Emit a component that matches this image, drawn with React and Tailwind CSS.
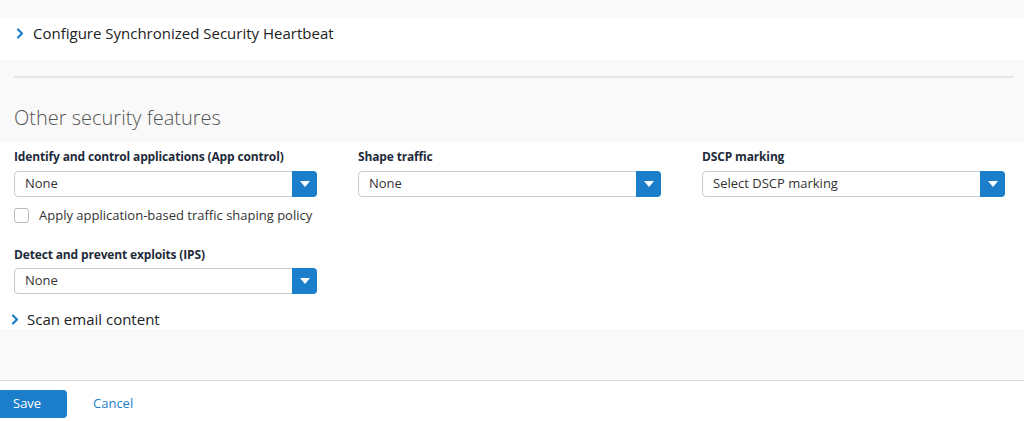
import React from "react";

const font = { fontFamily: '"Open Sans", "Noto Sans", sans-serif' };

function Chevron() {
  return (
    <svg width="8" height="11" viewBox="0 0 8 11" className="shrink-0">
      <polyline points="2,1.5 6,5.5 2,9.5" fill="none" stroke="#1a7ecb" strokeWidth="2.2" strokeLinecap="round" strokeLinejoin="round" />
    </svg>
  );
}

function Select({ value }) {
  return (
    <div className="flex h-[26px] w-[303px] rounded-[4px] border border-[#c9c9c9] bg-white">
      <div className="flex flex-1 items-center pl-[10px] text-[13px] text-[#333]">{value}</div>
      <div className="-my-px -mr-px flex w-[25px] items-center justify-center rounded-r-[4px] bg-[#1b7ecb]">
        <svg width="10" height="6" viewBox="0 0 10 6">
          <polygon points="0,0 10,0 5,6" fill="white" />
        </svg>
      </div>
    </div>
  );
}

function Label({ children, className = "mb-[6px]" }) {
  return <div className={`${className} text-[12px] font-bold leading-[16px] tracking-[-0.15px] text-[#1e2b3a]`}>{children}</div>;
}

export default function App() {
  return (
    <div className="w-[1024px] h-[421px] bg-white overflow-hidden" style={font}>
      <div className="h-[18px] bg-[#f9f9f9]" />
      <div className="flex h-[42px] items-start gap-[9px] pl-[16px] pt-[5px] text-[15px] leading-[20px] text-[#222]">
        <span className="flex h-[20px] items-center"><Chevron /></span>
        <span>Configure Synchronized Security Heartbeat</span>
      </div>
      <div className="h-[82px] bg-[#f9f9f9] pt-[16px]">
        <div className="ml-[14px] mr-[10px] h-[2px] bg-[#e6e6e6]" />
        <div className="ml-[14px] mt-[27px] text-[20px] font-light leading-[26px] text-[#555]">Other security features</div>
      </div>
      <div className="h-[187px] bg-white pt-[7px]">
        <div className="grid grid-cols-[303px_303px_303px] gap-x-[41px] px-[14px]">
          <div>
            <Label>Identify and control applications (App control)</Label>
            <Select value="None" />
            <div className="mt-[9px] flex h-[18px] items-center gap-[10px]">
              <div className="h-[15px] w-[15px] rounded-[3px] border border-[#bbb] bg-white" />
              <span className="text-[13px] leading-[18px] text-[#333]">Apply application-based traffic shaping policy</span>
            </div>
          </div>
          <div>
            <Label>Shape traffic</Label>
            <Select value="None" />
          </div>
          <div>
            <Label>DSCP marking</Label>
            <Select value="Select DSCP marking" />
          </div>
        </div>
        <div className="mt-[23px] px-[14px]">
          <Label className="mb-[5px]">Detect and prevent exploits (IPS)</Label>
          <Select value="None" />
        </div>
        <div className="mt-[15px] flex items-center gap-[8px] pl-[11px] text-[15px] leading-[20px] text-[#222]">
          <Chevron />
          <span>Scan email content</span>
        </div>
      </div>
      <div className="h-[52px] bg-[#f9f9f9] border-b border-[#dcdcdc]" />
      <div className="flex items-center gap-[26px] pt-[9px]">
        <button className="h-[28px] w-[67px] rounded-r-[4px] bg-[#1b7ecb] pl-[13px] text-left text-[13px] text-white">Save</button>
        <span className="text-[13px] text-[#1b7ecb]">Cancel</span>
      </div>
    </div>
  );
}
